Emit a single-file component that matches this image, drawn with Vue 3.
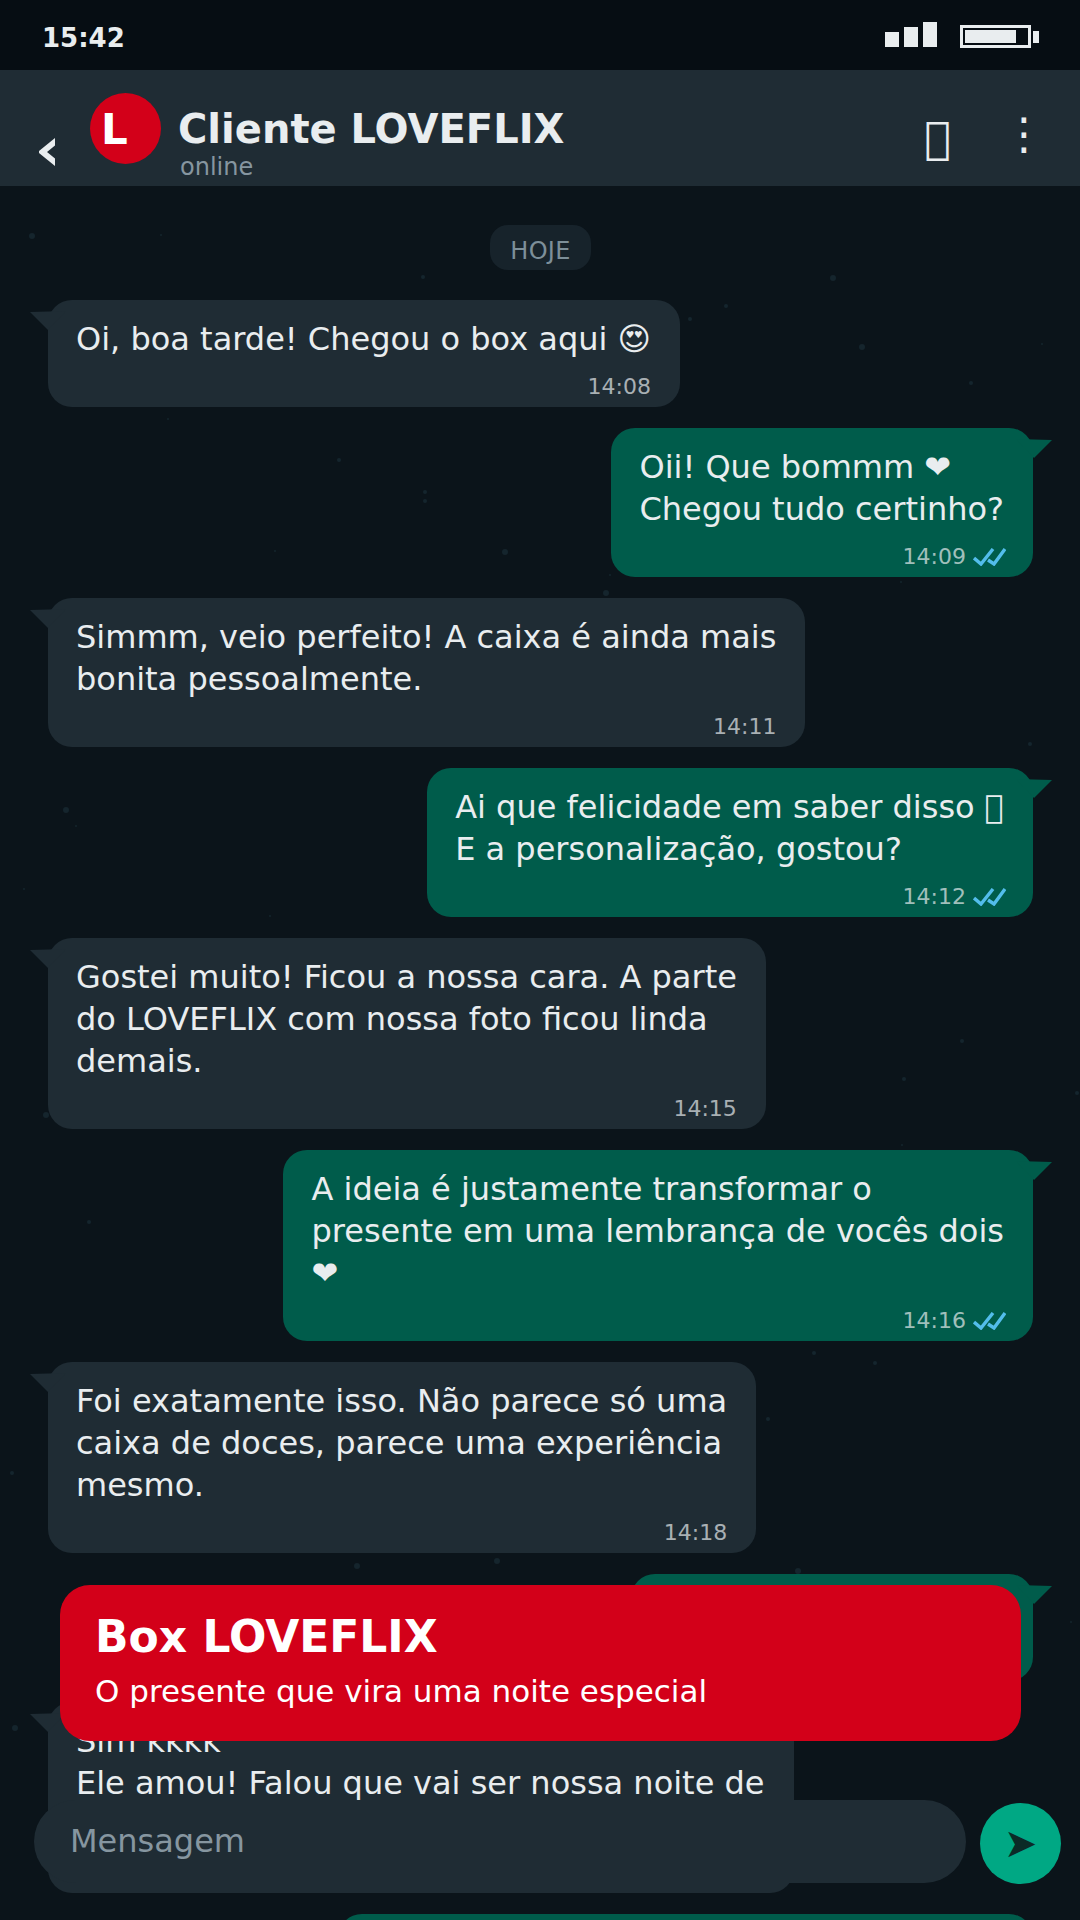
<template>
  <div class="phone">
    <svg class="stars" width="1080" height="1920">
      <circle
        v-for="(s, i) in stars"
        :key="i"
        :cx="s[0]"
        :cy="s[1]"
        :r="s[2]"
        fill="#15252d"
      />
    </svg>

    <div class="status">
      <span class="clock">15:42</span>
      <div class="status-right">
        <div class="signal">
          <i class="b1"></i>
          <i class="b2"></i>
          <i class="b3"></i>
        </div>
        <div class="battery"><i></i></div>
        <div class="nub"></div>
      </div>
    </div>

    <div class="header">
      <svg class="back" width="16" height="28" viewBox="0 0 16 28">
        <path d="M16 0 L16 7.5 L8 14 L16 20.5 L16 28 L0 15 L0 13 Z" fill="#e9edef" />
      </svg>
      <div class="avatar">L</div>
      <div class="who">
        <div class="name">Cliente LOVEFLIX</div>
        <div class="online">online</div>
      </div>
      <span class="call">{{ "\uE000" }}</span>
      <span class="more">⋮</span>
    </div>

    <div class="chat">
      <div class="day">HOJE</div>
      <div
        v-for="m in messages"
        :key="m.time"
        class="bubble"
        :class="m.out ? 'out' : 'in'"
      >
        <div class="text">{{ m.text }}</div>
        <div class="meta">
          <span>{{ m.time }}</span>
          <svg v-if="m.out" width="33" height="18" viewBox="0 0 33 18">
            <path
              d="M1 10 L8 16 L20 1 M15 12 L21 16 L32 1"
              fill="none"
              stroke="#53bdeb"
              stroke-width="3.4"
            />
          </svg>
        </div>
      </div>
    </div>

    <div class="banner">
      <div class="banner-title">Box LOVEFLIX</div>
      <div class="banner-sub">O presente que vira uma noite especial</div>
    </div>

    <div class="input-row">
      <div class="input">Mensagem</div>
      <div class="send">➤</div>
    </div>
  </div>
</template>

<script setup>
const messages = [
  { text: "Oi, boa tarde! Chegou o box aqui 😍", time: "14:08" },
  { text: "Oii! Que bommm ❤\nChegou tudo certinho?", time: "14:09", out: true },
  { text: "Simmm, veio perfeito! A caixa é ainda mais\nbonita pessoalmente.", time: "14:11" },
  { text: "Ai que felicidade em saber disso \uE000\nE a personalização, gostou?", time: "14:12", out: true },
  { text: "Gostei muito! Ficou a nossa cara. A parte\ndo LOVEFLIX com nossa foto ficou linda\ndemais.", time: "14:15" },
  { text: "A ideia é justamente transformar o\npresente em uma lembrança de vocês dois\n❤", time: "14:16", out: true },
  { text: "Foi exatamente isso. Não parece só uma\ncaixa de doces, parece uma experiência\nmesmo.", time: "14:18" },
  { text: "E ele, gostou do Box?", time: "14:19", out: true },
  { text: "Sim kkkk\nEle amou! Falou que vai ser nossa noite de\nfilme.", time: "14:21" },
  { text: "Que fofo! Fico tão feliz por vocês dois ❤", time: "14:22", out: true },
];

const stars = [
  [32, 236, 3], [161, 235, 1], [423, 277, 2], [833, 278, 3], [726, 306, 2],
  [690, 319, 2], [862, 347, 3], [971, 383, 2], [1042, 344, 1], [168, 419, 1],
  [339, 460, 2], [425, 492, 2], [425, 501, 2], [505, 552, 3], [275, 551, 1],
  [610, 575, 1], [901, 582, 1], [606, 593, 3], [1030, 744, 2], [76, 826, 1],
  [66, 810, 3], [24, 889, 1], [270, 916, 1], [962, 1041, 2], [904, 1079, 2],
  [1077, 1093, 2], [46, 1115, 3], [902, 1145, 1], [89, 1222, 2], [814, 1353, 2],
  [875, 1363, 2], [768, 1419, 2], [12, 1473, 2], [357, 1566, 3], [497, 1561, 3],
  [798, 1571, 3], [15, 1728, 3], [1071, 1622, 1],
];
</script>

<style>
html,
body {
  margin: 0;
  background: #0b141a;
}
</style>

<style scoped>
.phone {
  position: relative;
  width: 1080px;
  height: 1920px;
  overflow: hidden;
  display: flex;
  flex-direction: column;
  background: #0b141a;
  color: #e9edef;
  font-family: "DejaVu Sans", sans-serif;
}
.stars {
  position: absolute;
  left: 0;
  top: 0;
}
.status {
  position: relative;
  height: 70px;
  flex: none;
  display: flex;
  align-items: center;
  justify-content: space-between;
  padding: 0 41px 0 42px;
  box-sizing: border-box;
  background: #060d13;
}
.clock {
  font-size: 26px;
  font-weight: 700;
  margin-top: 6px;
}
.status-right {
  display: flex;
  align-items: flex-end;
}
.signal {
  display: flex;
  align-items: flex-end;
  gap: 5px;
  margin-right: 23px;
  margin-bottom: 1px;
}
.signal i {
  display: block;
  width: 14px;
  background: #e9edef;
}
.b1 {
  height: 15px;
}
.b2 {
  height: 20px;
}
.b3 {
  height: 25px;
}
.battery {
  width: 71px;
  height: 23px;
  box-sizing: border-box;
  border: 3px solid #e9edef;
  padding: 2px;
}
.battery i {
  display: block;
  width: 51px;
  height: 13px;
  background: #e9edef;
}
.nub {
  width: 6px;
  height: 12px;
  margin: 0 0 5px 2px;
  background: #e9edef;
}
.header {
  position: relative;
  height: 116px;
  flex: none;
  display: flex;
  align-items: flex-start;
  box-sizing: border-box;
  background: #1f2c34;
}
.back {
  flex: none;
  margin: 68px 35px 0 39px;
}
.avatar {
  flex: none;
  width: 71px;
  height: 71px;
  margin-top: 23px;
  border-radius: 50%;
  background: #d30019;
  color: #fff;
  font-size: 42px;
  font-weight: 700;
  line-height: 73px;
  padding-left: 11px;
  box-sizing: border-box;
}
.who {
  margin-left: 17px;
  flex: 1;
}
.name {
  font-size: 40px;
  font-weight: 700;
  line-height: 48px;
  margin-top: 35px;
}
.online {
  font-size: 24px;
  line-height: 28px;
  color: #8696a0;
  margin: 0 0 0 2px;
}
.call {
  font-size: 44px;
  line-height: 50px;
  margin: 43px 5px 0 0;
}
.more {
  font-size: 44px;
  line-height: 50px;
  margin: 39px 34px 0 46px;
}
.chat {
  position: relative;
  flex: 1;
  display: flex;
  flex-direction: column;
  align-items: flex-start;
  padding: 39px 47px 0 48px;
  overflow: hidden;
}
.day {
  align-self: center;
  width: 101px;
  height: 45px;
  margin: 0 0 30px 0;
  border-radius: 18px;
  background: #17232b;
  color: #7d8f99;
  font-size: 24px;
  letter-spacing: 0.3px;
  line-height: 52px;
  text-align: center;
}
.bubble {
  position: relative;
  flex: none;
  margin-bottom: 21px;
  padding: 18px 29px 7px 28px;
  border-radius: 24px;
  font-size: 32px;
  line-height: 42px;
}
.bubble::before {
  content: "";
  position: absolute;
  top: 11px;
  width: 36px;
  height: 19px;
}
.in {
  background: #1f2c34;
}
.in::before {
  left: -18px;
  background: #1f2c34;
  clip-path: polygon(0 1px, 100% 0, 50% 100%);
}
.out {
  align-self: flex-end;
  background: #005c4b;
}
.out::before {
  right: -19px;
  background: #005c4b;
  clip-path: polygon(0 0, 100% 1px, 50% 100%);
}
.text {
  white-space: pre-line;
}
.meta {
  display: flex;
  justify-content: flex-end;
  align-items: center;
  gap: 7px;
  height: 26px;
  margin-top: 14px;
  font-size: 22px;
  color: rgba(233, 237, 239, 0.7);
}
.meta svg {
  margin-right: -2px;
}
.banner {
  position: absolute;
  left: 60px;
  top: 1585px;
  width: 961px;
  height: 156px;
  box-sizing: border-box;
  padding: 27px 35px 0;
  border-radius: 30px;
  background: #d30019;
  color: #fff;
}
.banner-title {
  font-size: 44px;
  font-weight: 700;
  line-height: 50px;
}
.banner-sub {
  font-size: 31px;
  line-height: 40px;
  margin-top: 9px;
}
.input-row {
  position: absolute;
  left: 34px;
  top: 1800px;
  width: 1027px;
  display: flex;
  gap: 14px;
}
.input {
  flex: 1;
  height: 83px;
  padding-left: 36px;
  border-radius: 42px;
  background: #1f2c34;
  color: #8696a0;
  font-size: 32px;
  line-height: 83px;
}
.send {
  flex: none;
  width: 81px;
  height: 81px;
  margin-top: 3px;
  border-radius: 50%;
  background: #00a884;
  color: #0b2b27;
  font-size: 40px;
  line-height: 80px;
  text-align: center;
}
</style>
